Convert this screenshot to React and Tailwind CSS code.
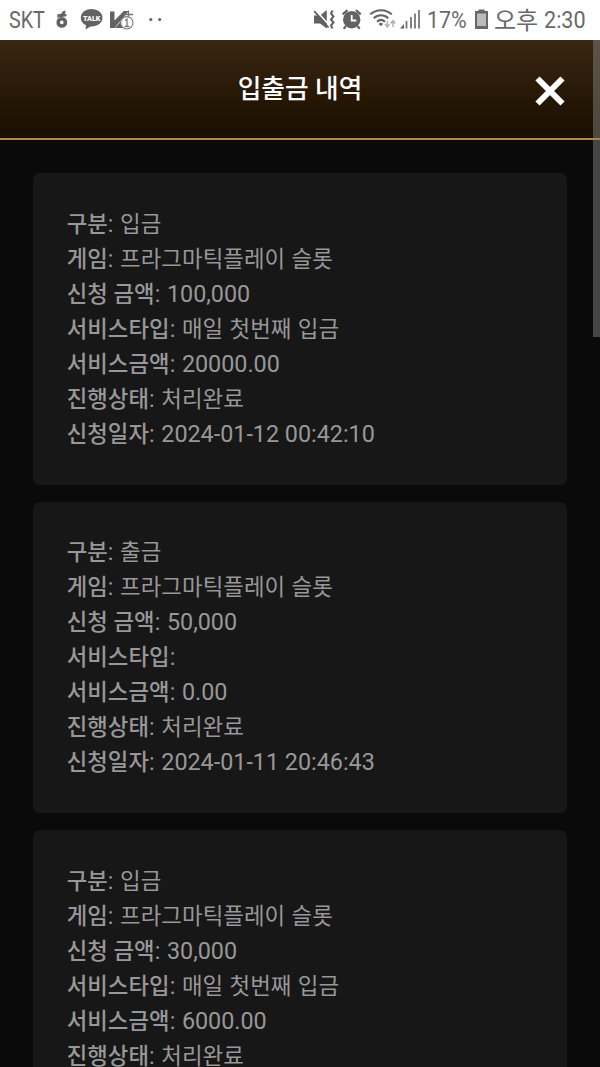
const records = [
  { kind: '입금', amount: '100,000', service: '매일 첫번째 입금', bonus: '20000.00', date: '2024-01-12 00:42:10' },
  { kind: '출금', amount: '50,000', service: '', bonus: '0.00', date: '2024-01-11 20:46:43' },
  { kind: '입금', amount: '30,000', service: '매일 첫번째 입금', bonus: '6000.00' },
];

function Row({ label, value, korean }) {
  return (
    <p className="h-[35px] whitespace-pre leading-[35px]">
      <b className="text-[22.3px] font-medium tracking-[.08px]">{label}</b>
      <span>:</span>
      <span className="ml-[.8px]"> </span>
      <span className={korean ? 'text-[22.4px] tracking-[.04px] [word-spacing:.8px]' : ''}>{value}</span>
    </p>
  );
}

function Card({ record }) {
  return (
    <section className="h-[311.67px] shrink-0 rounded-[7px] bg-[#171717] px-[33.33px] pt-[33.67px] text-[23.33px] text-[#989898]">
      <Row label="구분" value={record.kind} korean />
      <Row label="게임" value="프라그마틱플레이 슬롯" korean />
      <Row label="신청 금액" value={record.amount} />
      <Row label="서비스타입" value={record.service} korean />
      <Row label="서비스금액" value={record.bonus} />
      <Row label="진행상태" value="처리완료" korean />
      {record.date && <Row label="신청일자" value={record.date} />}
    </section>
  );
}

function LeftIcons() {
  return (
    <svg className="h-10 w-[120px] shrink-0" viewBox="50 0 120 40" fill="#626262">
      <circle cx="61.8" cy="22.4" r="3.6" fill="none" stroke="#626262" strokeWidth="3.6" />
      <path d="M57.3 14.2l3.700-.2 1.500-2.600 2.500-1 .6 1.700-1 1.900 1.800-.3v2.600l-9 1.400z" />
      <path d="M91.500 9C85.300 9 80.800 12.800 80.800 17.700c0 3.500 2.100 6.200 5.200 7.600l-.5 4.200 4.900-3.100h1.100c6.200 0 11-3.800 11-8.700S97.700 9 91.500 9z" />
      <text x="91.700" y="20.900" fill="#fff" textAnchor="middle" fontFamily="Roboto, sans-serif" fontWeight="900" fontSize="7.800" textLength="17.500" lengthAdjust="spacingAndGlyphs">TALK</text>
      <path d="M110 11.500h4.500v9l9.300-9.500h5L114.500 28H110z" />
      <path d="M115 28l8-9v9z" />
      <path d="M123.500 14.500h9.500M128.500 10.500v6" stroke="#777" strokeWidth="1.300" />
      <circle cx="126.800" cy="22.800" r="6.200" fill="#fff" fillOpacity=".9" stroke="#777" strokeWidth="1.100" />
      <path d="M124.800 20.500l2.200-1.300v7.300M124.500 26.500h5" fill="none" stroke="#777" strokeWidth="1.300" />
      <circle cx="150.800" cy="19.500" r="1.600" />
      <circle cx="159.700" cy="19.500" r="1.600" />
    </svg>
  );
}

function RightIcons() {
  return (
    <svg className="h-10 w-[110px] shrink-0" viewBox="312 0 110 40" fill="#626262">
      <path d="M314 15.500h6l6.800-5.500v18.500L320 23.500h-6z" />
      <path d="M316 10.500L330 26" stroke="#fff" strokeWidth="1.600" />
      <path d="M314.200 11.200L328.500 27.500" stroke="#626262" strokeWidth="1.800" />
      <path d="M332.500 10.500l-1.500 3 2.500 3-2.500 3 2.500 3-2.500 3 1.500 3" fill="none" stroke="#626262" strokeWidth="2" />
      <circle cx="351.700" cy="19.700" r="8.700" />
      <path d="M342.700 14.300l4.800-4.200M360.700 14.300l-4.800-4.200M346 26l-2.300 2.700M357.400 26l2.300 2.700" stroke="#626262" strokeWidth="2.200" />
      <path d="M351.700 15v5.500h4.600" fill="none" stroke="#fff" strokeWidth="1.800" />
      <g fill="none" stroke="#626262" strokeWidth="2">
        <path d="M370.200 14.400c6-5.700 15.600-5.700 21.600 0" />
        <path d="M373.700 18.200c4.200-3.900 10.400-3.900 14.600 0" />
        <path d="M377 21.700c2.400-2.200 5.600-2.200 8 0" />
      </g>
      <path d="M378.800 24a2.300 2.300 0 0 1 4.200 0l-2.100 2.200z" />
      <path d="M387.300 21v5.500M385 24l2.300 3 2.300-3M393 27v-6M390.700 23.500l2.300-3 2.300 3" fill="none" stroke="#b5b5b5" strokeWidth="1.500" />
      <path d="M400 28.500l4-4.500v4.500z" />
      <path d="M406.500 28.500v-7.500M411 28.500V17M415 28.500V13.500M419 28.500V10" stroke="#777" strokeWidth="1.800" />
    </svg>
  );
}

function StatusBar() {
  return (
    <div className="flex h-10 shrink-0 items-center bg-white pl-[8.500px] text-[23.5px] leading-10 text-[#696969]">
      <span className="w-[41.5px] origin-left scale-x-[.84]">SKT</span>
      <LeftIcons />
      <span className="w-[142px]" />
      <RightIcons />
      <span className="ml-[5px] w-[46px] origin-left scale-x-[.91]">17%</span>
      <svg className="h-10 w-[16px] shrink-0" viewBox="472 0 16 40">
        <path d="M474 11h3.500V9.500h6V11H487v18h-13z" fill="#666" />
        <path d="M476 13.500h9V26h-9z" fill="#bbb" />
      </svg>
      <span className="ml-[5px] w-[50px] whitespace-nowrap pt-0.5 text-[24px]">오후</span>
      <span className="origin-left scale-x-[.9] text-[24px]">2:30</span>
    </div>
  );
}

export default function App() {
  return (
    <main className="relative flex h-[1067px] w-[600px] flex-col overflow-hidden bg-[#0a0a0a] font-[Roboto,'Noto_Sans_CJK_KR',sans-serif]">
      <StatusBar />
      <header className="grid h-[100px] shrink-0 grid-cols-[100px_1fr_100px] items-center border-b-2 border-[#b88946] bg-linear-to-b from-[#392613] to-[#1a0e00] text-white">
        <span />
        <h1 className="text-center text-[25.7px] font-medium">입출금 내역</h1>
        <button className="flex justify-center pt-[3px]" aria-label="닫기">
          <svg className="size-[30px]" viewBox="0 0 30 30">
            <path d="M2.500 2.500l25 25M27.500 2.500l-25 25" stroke="#fff" strokeWidth="6" />
          </svg>
        </button>
      </header>
      <div className="flex min-h-0 flex-1 flex-col gap-[16.67px] overflow-hidden px-[33.33px] pt-[33.33px]">
        {records.map((record, index) => (
          <Card key={index} record={record} />
        ))}
      </div>
      <div className="absolute right-0 top-10 h-[297px] w-[6.67px] bg-[#808080]/50" />
    </main>
  );
}
